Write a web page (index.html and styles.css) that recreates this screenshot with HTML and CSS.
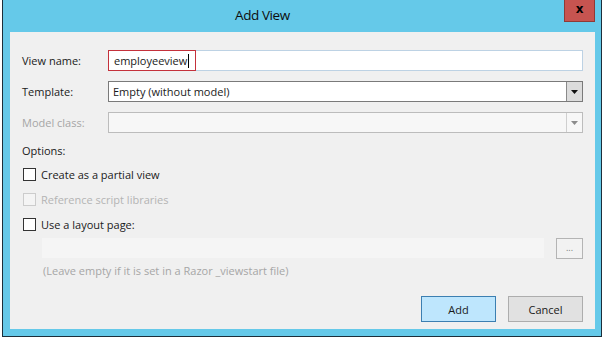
FILE: index.html
```html
<!DOCTYPE html>
<html lang="en">
<head>
    <meta charset="UTF-8">
    <title>Add View</title>
    <link rel="stylesheet" href="styles.css">
</head>
<body>
    <div class="window">
        <!-- title bar -->
        <div class="titlebar">
            <span class="title">Add View</span>
            <span class="close">x</span>
        </div>

        <div class="content">
            <div class="fields">
                <label class="field-label">View name:</label>
                <div class="textbox">
                    <span class="name-text">employeeview<span class="caret"></span></span>
                </div>

                <label class="field-label">Template:</label>
                <div class="combo">
                    <span class="combo-value">Empty (without model)</span>
                    <span class="combo-btn">
                        <svg viewBox="0 0 7 4"><polygon points="0,0 7,0 3.5,4"></polygon></svg>
                    </span>
                </div>

                <label class="field-label disabled">Model class:</label>
                <div class="combo combo-disabled">
                    <span class="combo-value"></span>
                    <span class="combo-btn">
                        <svg viewBox="0 0 7 4"><polygon points="0,0 7,0 3.5,4"></polygon></svg>
                    </span>
                </div>
            </div>

            <div class="options-label">Options:</div>

            <div class="check">
                <span class="box"></span>
                <span>Create as a partial view</span>
            </div>
            <div class="check check-disabled">
                <span class="box"></span>
                <span>Reference script libraries</span>
            </div>
            <div class="check">
                <span class="box"></span>
                <span>Use a layout page:</span>
            </div>

            <div class="layout-row">
                <div class="layout-input"></div>
                <span class="browse">...</span>
            </div>
            <div class="hint">(Leave empty if it is set in a Razor _viewstart file)</div>

            <div class="actions">
                <span class="btn btn-primary">Add</span>
                <span class="btn">Cancel</span>
            </div>
        </div>
    </div>
</body>
</html>
```

FILE: styles.css
```css
:root {
    --frame: #65c9e9;
    --frame-edge: #1c2e3a;
    --panel: #f0f0f0;
    --text: #1a1a1a;
    --text-disabled: #a6a6a6;
}

* {
    margin: 0;
    padding: 0;
    box-sizing: border-box;
}

body {
    background: #ffffff;
    font-family: 'Open Sans', 'Noto Sans', sans-serif;
    font-size: 11px;
    color: var(--text);
}

.window {
    margin-left: 2px;
    width: 600px;
    height: 337px;
    background: var(--frame);
    border: 1px solid var(--frame-edge);
    border-top: none;
    padding: 0 6px 7px 7px;
    display: flex;
    flex-direction: column;
}

.titlebar {
    height: 32px;
    display: flex;
    align-items: flex-start;
}

.title {
    margin-left: 225px;
    margin-top: 6px;
    font-size: 13.5px;
    letter-spacing: -0.4px;
    color: #0d0d0d;
}

.close {
    margin-left: auto;
    width: 31px;
    height: 22px;
    background: #c75450;
    border: 1px solid #8f3a36;
    border-top: none;
    color: #000;
    font-family: 'DejaVu Sans', sans-serif;
    font-weight: bold;
    font-size: 12px;
    line-height: 19px;
    text-align: center;
}

.content {
    flex: 1;
    background: var(--panel);
    padding: 18px 12px 6px 12px;
}

.fields {
    display: grid;
    grid-template-columns: 86px 1fr;
    grid-auto-rows: 21px;
    row-gap: 10px;
}

.field-label {
    display: flex;
    align-items: center;
}

.disabled {
    color: var(--text-disabled);
}

.textbox {
    background: #fff;
    border: 1px solid #bdd2e4;
    display: flex;
}

.name-text {
    margin: -1px 0 -1px -1px;
    width: 88px;
    border: 1px solid #c4313b;
    padding-left: 5px;
    display: flex;
    align-items: center;
}

.caret {
    width: 1px;
    height: 14px;
    background: #000;
    margin-left: 1px;
}

.combo {
    background: #fff;
    border: 1px solid #7a7a7a;
    display: flex;
}

.combo-value {
    flex: 1;
    padding-left: 4px;
    display: flex;
    align-items: center;
}

.combo-btn {
    width: 16px;
    background: #dcdcdc;
    border-left: 1px solid #8a8a8a;
    display: flex;
    align-items: center;
    justify-content: center;
}

.combo-btn svg {
    width: 7px;
    height: 4px;
    fill: #111;
}

.combo-disabled {
    background: #f7f7f7;
    border-color: #bcbcbc;
}

.combo-disabled .combo-btn {
    background: #f7f7f7;
    border-left-color: #cfcfcf;
}

.combo-disabled .combo-btn svg {
    fill: #8c8c8c;
}

.options-label {
    margin-top: 10px;
    height: 16px;
    line-height: 16px;
}

.check {
    height: 25px;
    display: flex;
    align-items: center;
    gap: 5px;
    padding-left: 1px;
}

.options-label + .check {
    margin-top: 3px;
}

.box {
    width: 13px;
    height: 13px;
    background: #fff;
    border: 1px solid #333;
}

.check-disabled {
    color: #b4b4b4;
}

.check-disabled .box {
    background: #f4f4f4;
    border-color: #cccccc;
}

.layout-row {
    margin-top: 1px;
    height: 21px;
    display: flex;
    padding-left: 20px;
}

.layout-input {
    width: 502px;
    height: 20px;
    background: #f5f5f5;
}

.browse {
    margin-left: auto;
    width: 27px;
    background: #f2f2f2;
    border: 1px solid #b4b4b4;
    color: #7a7a7a;
    font-size: 9px;
    text-align: center;
    line-height: 17px;
}

.hint {
    margin-top: 4px;
    padding-left: 21px;
    height: 16px;
    line-height: 16px;
    color: var(--text-disabled);
}

.actions {
    margin-top: 17px;
    display: flex;
    justify-content: flex-end;
    gap: 12px;
}

.btn {
    width: 75px;
    height: 26px;
    background: #e1e1e1;
    border: 1px solid #adadad;
    display: flex;
    align-items: center;
    justify-content: center;
}

.btn-primary {
    background: #bee6fd;
    border-color: #3c7fb1;
}
```
